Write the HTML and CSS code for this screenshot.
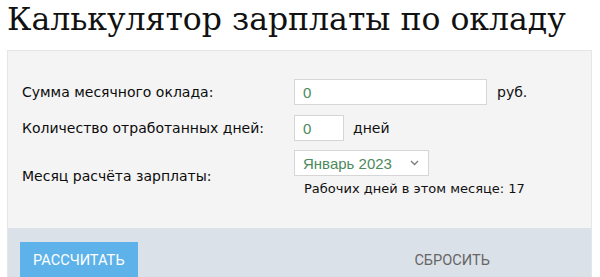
FILE: index.html
```html
<!DOCTYPE html>
<html lang="ru">
<head>
<meta charset="utf-8">
<title>Калькулятор зарплаты по окладу</title>
<link rel="stylesheet" href="styles.css">
</head>
<body>
<div class="page">
  <h1 class="title">Калькулятор зарплаты по окладу</h1>
  <div class="calc">
    <div class="form">
      <div class="label">Сумма месячного оклада:</div>
      <div class="field">
        <div class="input input-wide">0</div>
        <span class="unit">руб.</span>
      </div>
      <div class="label">Количество отработанных дней:</div>
      <div class="field">
        <div class="input input-narrow">0</div>
        <span class="unit unit-days">дней</span>
      </div>
      <div class="label label-month">Месяц расчёта зарплаты:</div>
      <div class="field field-month">
        <div class="select">
          <span>Январь 2023</span>
          <svg class="chev" width="9" height="6" viewBox="0 0 9 6"><path d="M1 1 L4.5 4.5 L8 1" fill="none" stroke="#7a7a7a" stroke-width="1.3"/></svg>
        </div>
        <div class="info">Рабочих дней в этом месяце: 17</div>
      </div>
    </div>
    <div class="actions">
      <button class="btn btn-primary">РАССЧИТАТЬ</button>
      <button class="btn btn-reset">СБРОСИТЬ</button>
    </div>
  </div>
</div>
</body>
</html>
```

FILE: styles.css
```css
html, body {
  margin: 0;
  padding: 0;
  background: #ffffff;
}
.page {
  width: 585px;
  margin-left: 7px;
}
.title {
  font-family: "DejaVu Serif", "Liberation Serif", serif;
  font-weight: normal;
  font-size: 31.5px;
  line-height: 36px;
  color: #111;
  margin: 0;
  padding-top: 1px;
  height: 49px;
}
.calc {
  border: 1px solid #e6e6e6;
  border-bottom: none;
  background: #f4f4f4;
}
.form {
  display: grid;
  grid-template-columns: 272px 1fr;
  row-gap: 10px;
  padding: 28px 0 31px 14px;
  font-family: "DejaVu Sans", Verdana, sans-serif;
  font-size: 13px;
  color: #111;
}
.label {
  display: flex;
  align-items: center;
  font-size: 14px;
  color: #0c0c0c;
}
.label-month {
  padding-top: 4px;
}
.field {
  display: flex;
  align-items: center;
}
.field-month {
  flex-direction: column;
  align-items: flex-start;
}
.input, .select {
  box-sizing: border-box;
  height: 26px;
  background: #fff;
  border: 1px solid #d6d6d6;
  font-family: "Liberation Sans", Arial, sans-serif;
  font-size: 15px;
  color: #4c8a5c;
  display: flex;
  align-items: center;
  padding-left: 8px;
}
.input-wide { width: 193px; }
.input-narrow { width: 50px; }
.unit { margin-left: 10px; font-size: 14px; }
.unit-days { margin-left: 9px; }
.select {
  width: 135px;
  justify-content: space-between;
  padding-right: 9px;
  margin-top: -1px;
}
.chev { display: block; }
.info {
  margin: 5px 0 0 10px;
  line-height: 16px;
}
.actions {
  display: flex;
  justify-content: space-between;
  align-items: flex-start;
  background: #dbe1e8;
  padding: 14px 101px 0 12px;
  height: 50px;
  box-sizing: border-box;
}
.btn {
  font-family: Roboto, "Liberation Sans", Arial, sans-serif;
  font-size: 14.6px;
  border: none;
  height: 36px;
  cursor: pointer;
}
.btn-primary {
  background: #5eb2ea;
  color: #fff;
  padding: 0 13px;
}
.btn-reset {
  background: transparent;
  color: #666;
  padding: 0;
}
```
